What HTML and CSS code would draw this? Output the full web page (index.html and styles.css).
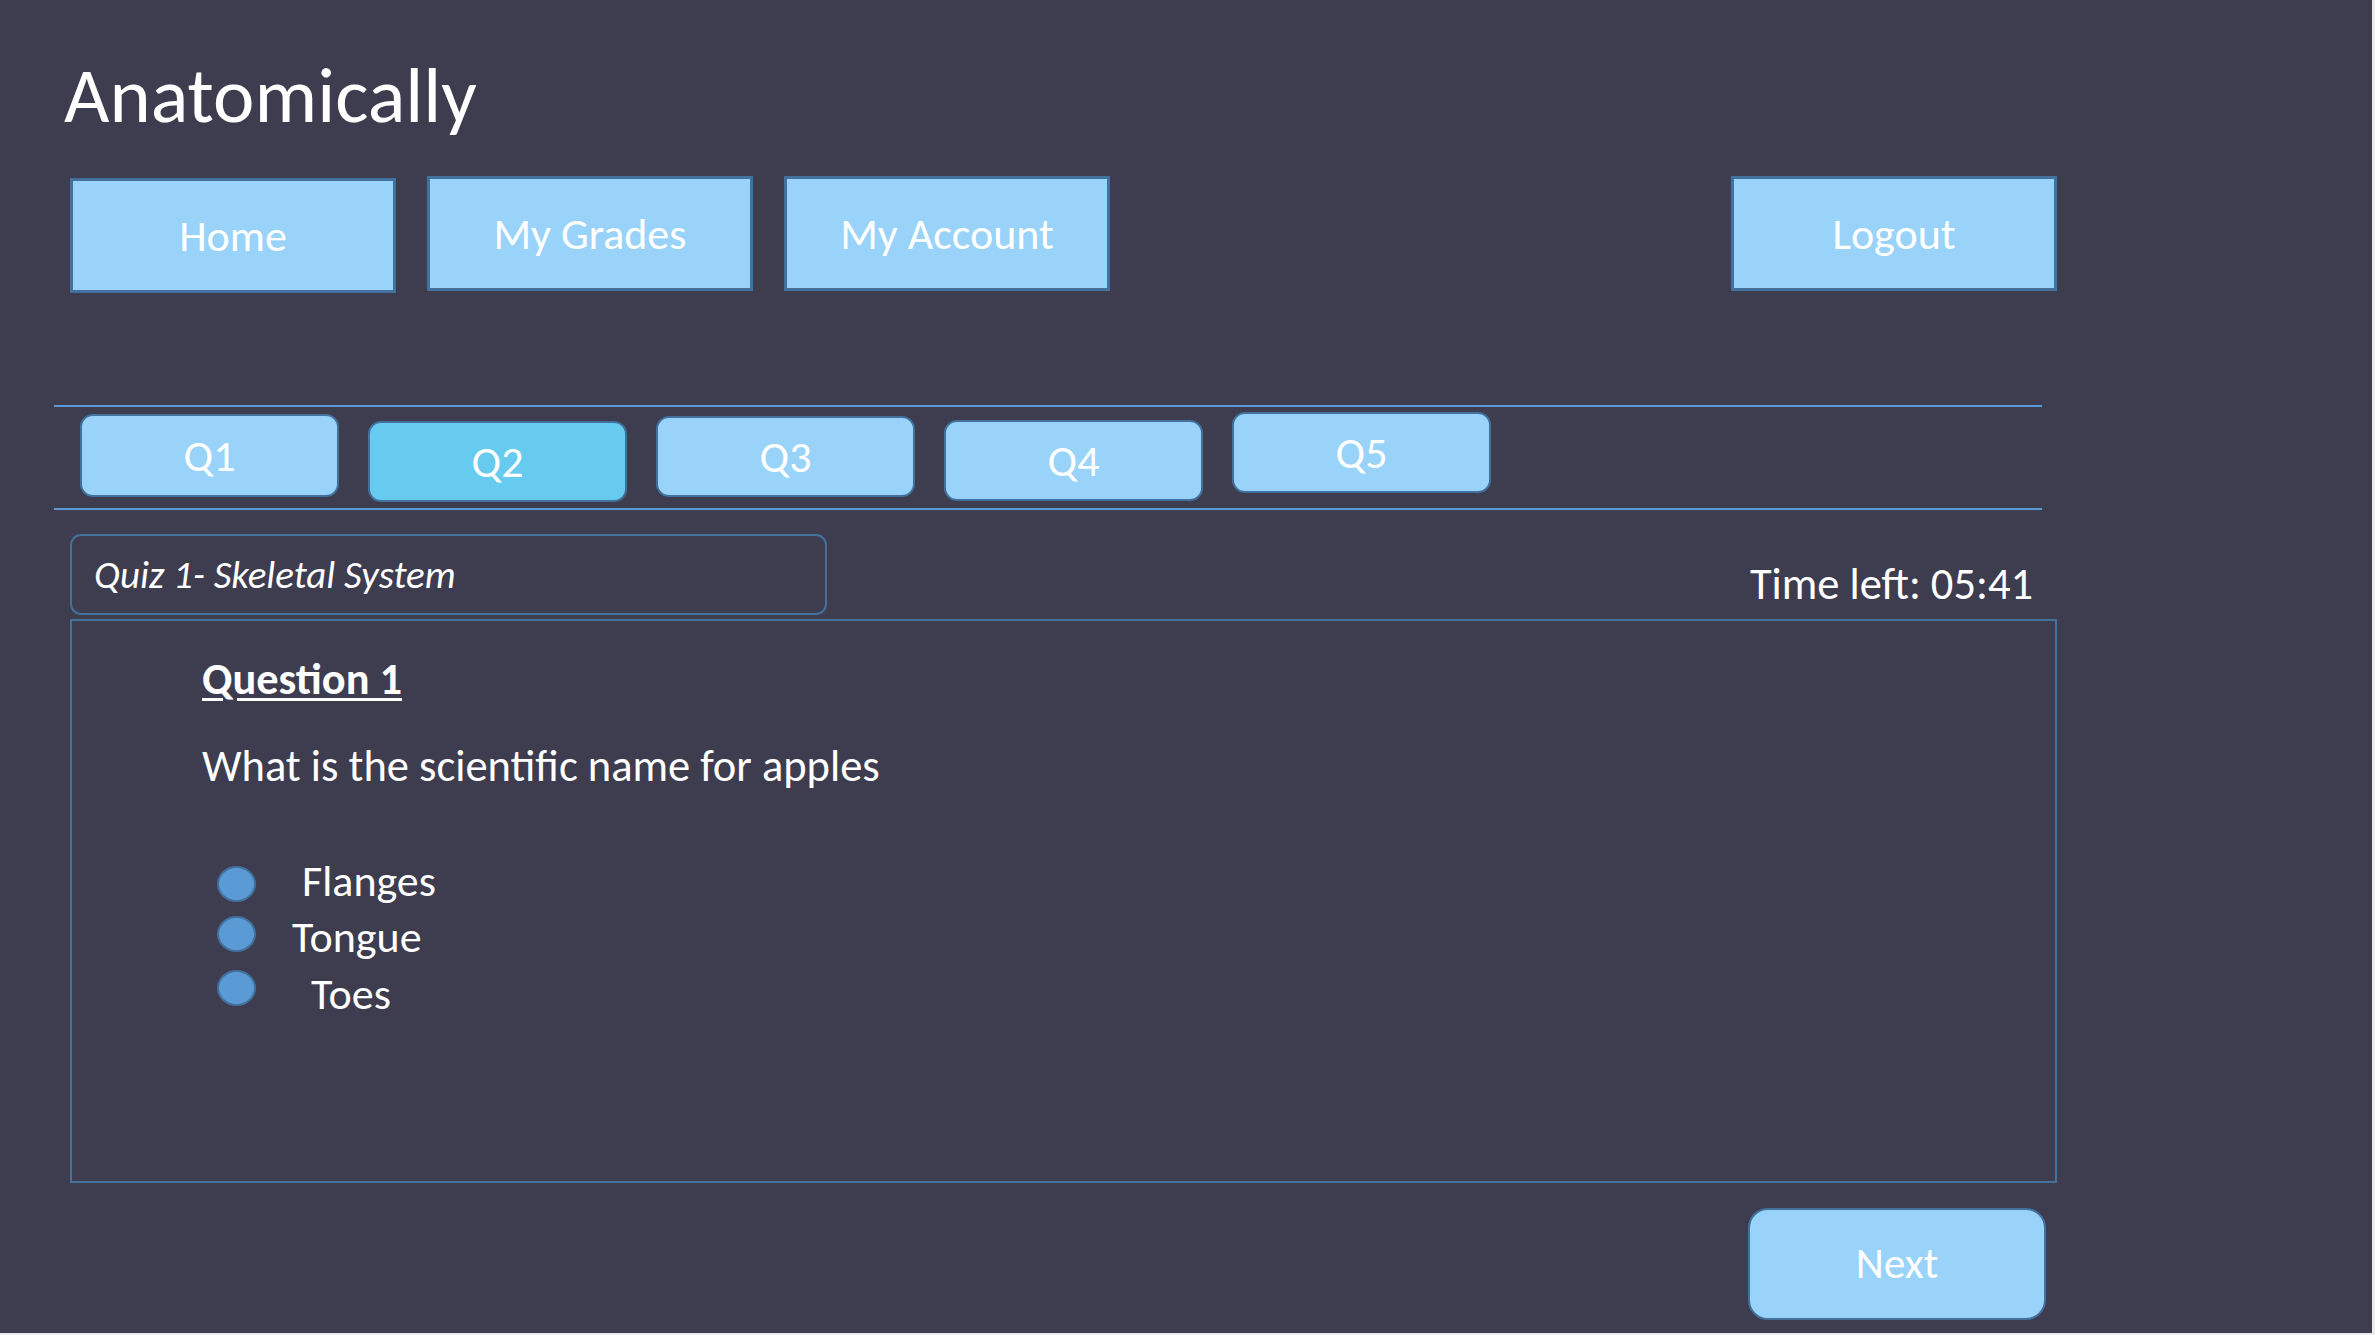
FILE: index.html
```html
<!DOCTYPE html>
<html lang="en">
<head>
<meta charset="utf-8">
<title>Anatomically</title>
<link rel="stylesheet" href="styles.css">
</head>
<body>
<div class="page">
  <h1 class="brand">Anatomically</h1>

  <nav class="nav">
    <a class="nav-btn nav-btn--low">Home</a>
    <a class="nav-btn">My Grades</a>
    <a class="nav-btn">My Account</a>
    <a class="nav-btn nav-btn--end">Logout</a>
  </nav>

  <div class="tabbar">
    <button class="tab tab--q1">Q1</button>
    <button class="tab tab--active tab--q2">Q2</button>
    <button class="tab tab--q3">Q3</button>
    <button class="tab tab--q4">Q4</button>
    <button class="tab tab--q5">Q5</button>
  </div>

  <div class="quiz-row">
    <div class="quiz-name">Quiz 1- Skeletal System</div>
    <div class="timer">Time left: 05:41</div>
  </div>

  <section class="question-box">
    <h2 class="question-title">Question 1</h2>
    <p class="question-text">What is the scientific name for apples</p>
    <ul class="options">
      <li class="option"><span class="radio radio--a"></span><span class="opt-label opt-label--a">Flanges</span></li>
      <li class="option"><span class="radio radio--b"></span><span class="opt-label opt-label--b">Tongue</span></li>
      <li class="option option--c"><span class="radio radio--c"></span><span class="opt-label opt-label--c">Toes</span></li>
    </ul>
  </section>

  <div class="footer">
    <button class="next-btn">Next</button>
  </div>
</div>
</body>
</html>
```
FILE: styles.css
```css
* { box-sizing: border-box; }

html, body {
  margin: 0;
  padding: 0;
  background: #ececec;
}

body {
  font-family: Carlito, Lato, "Liberation Sans", sans-serif;
  color: #ffffff;
}

.page {
  width: 2372px;
  height: 1333px;
  background: #3e3c4f;
  overflow: hidden;
  padding-top: 56px;
}

.brand {
  margin: 0;
  padding-left: 64px;
  font-size: 78.5px;
  line-height: 78px;
  font-weight: 400;
}

/* top navigation */
.nav {
  display: flex;
  align-items: flex-start;
  gap: 31px;
  margin-top: 42px;
  margin-left: 70px;
  width: 1987px;
}

.nav-btn {
  display: flex;
  align-items: center;
  justify-content: center;
  width: 326px;
  height: 115px;
  background: #99d3f9;
  border: 3px solid #41719c;
  font-size: 44px;
  line-height: 1;
  color: #ffffff;
}

.nav-btn--low { margin-top: 2px; }
.nav-btn--end { margin-left: auto; }

/* question tabs */
.tabbar {
  display: flex;
  align-items: flex-start;
  gap: 29px;
  margin-top: 112px;
  margin-left: 54px;
  width: 1988px;
  height: 105px;
  padding-left: 26px;
  border-top: 2px solid #5b9bd5;
  border-bottom: 2px solid #5b9bd5;
}

.tab {
  display: flex;
  align-items: center;
  justify-content: center;
  width: 259px;
  height: 81px;
  padding: 0;
  margin: 0;
  background: #99d3f9;
  border: 2px solid #41719c;
  border-radius: 13px;
  font-family: inherit;
  font-size: 44px;
  line-height: 1;
  color: #ffffff;
}

.tab--active { background: #66cbee; }
.tab--q1 { margin-top: 7px; height: 83px; }
.tab--q2 { margin-top: 14px; }
.tab--q3 { margin-top: 9px; }
.tab--q4 { margin-top: 13px; }
.tab--q5 { margin-top: 5px; }

/* quiz title row */
.quiz-row {
  display: flex;
  justify-content: space-between;
  align-items: flex-end;
  margin-top: 24px;
  margin-left: 70px;
  width: 1987px;
}

.quiz-name {
  display: flex;
  align-items: center;
  width: 757px;
  height: 81px;
  padding: 0 0 0 22px;
  border: 2px solid #41719c;
  border-radius: 11px;
  font-size: 39px;
  font-style: italic;
  line-height: 1;
}

.timer {
  font-size: 44.5px;
  line-height: 44px;
  margin-bottom: 9px;
  padding-right: 24px;
}

/* question box */
.question-box {
  margin-top: 4px;
  margin-left: 70px;
  width: 1987px;
  height: 564px;
  border: 2px solid #41719c;
  padding: 36px 0 0 130px;
}

.question-title {
  display: inline-block;
  margin: 0;
  font-size: 44.4px;
  line-height: 44px;
  font-weight: 700;
  text-decoration: underline;
  text-decoration-thickness: 3px;
  text-underline-offset: 4px;
}

.question-text {
  margin: 43px 0 0;
  font-size: 44.5px;
  line-height: 44px;
}

.options {
  list-style: none;
  margin: 71px 0 0;
  padding: 0 0 0 15px;
  display: flex;
  flex-direction: column;
  gap: 12px;
}

.option {
  display: flex;
  align-items: center;
  height: 44px;
  font-size: 44px;
  line-height: 44px;
}

.option--c { margin-top: 1px; }

.radio {
  flex: none;
  width: 39px;
  height: 36px;
  border-radius: 50%;
  background: #5b9bd5;
  border: 2px solid #41719c;
}

.radio--a { margin-top: 6px; }
.radio--b { margin-top: -7px; }
.radio--c { margin-top: -13px; }

.opt-label--a { margin-left: 46px; }
.opt-label--b { margin-left: 36px; }
.opt-label--c { margin-left: 55px; }

/* footer */
.footer {
  display: flex;
  justify-content: flex-end;
  margin-top: 25px;
  margin-left: 70px;
  width: 1976px;
}

.next-btn {
  display: flex;
  align-items: center;
  justify-content: center;
  width: 298px;
  height: 112px;
  padding: 0;
  margin: 0;
  background: #99d3f9;
  border: 2px solid #41719c;
  border-radius: 20px;
  font-family: inherit;
  font-size: 43.5px;
  line-height: 1;
  color: #ffffff;
}
```
